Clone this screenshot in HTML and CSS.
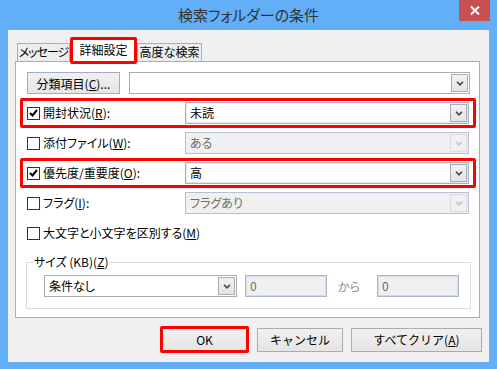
FILE: index.html
```html
<!DOCTYPE html>
<html>
<head>
  <meta charset="UTF-8">
  <title>検索フォルダーの条件</title>
  <link rel="stylesheet" href="styles.css">
</head>
<body>
  <div class="window">
    <div class="titlebar">
      <span></span>
      <h1 class="title">検索フォルダーの条件</h1>
      <div class="close">
        <svg width="10" height="9" viewBox="0 0 10 9"><path d="M1 0.5 L9 8.5 M9 0.5 L1 8.5" stroke="#FFFFFF" stroke-width="2" fill="none"/></svg>
      </div>
    </div>

    <div class="client">
      <div class="tabs">
        <div class="tab tab-msg">メッセージ</div>
        <div class="tab active">詳細設定</div>
        <div class="tab tab-adv">高度な検索</div>
      </div>

      <div class="panel">
        <div class="row first">
          <button class="btn btn-category">分類項目(<u>C</u>)...</button>
          <div class="combo">
            <span class="combo-text"></span>
            <span class="drop"><svg width="8" height="5" viewBox="0 0 8 5"><path d="M1 0.8 L4 3.8 L7 0.8" stroke="#444444" stroke-width="1.6" fill="none"/></svg></span>
          </div>
        </div>

        <div class="row mark">
          <label class="field"><span class="check"><svg width="9" height="8" viewBox="0 0 9 8"><path d="M1 4 L3.5 6.5 L8 1" stroke="#000000" stroke-width="2" fill="none"/></svg></span>開封状況(<u>R</u>):</label>
          <div class="combo blue">
            <span class="combo-text">未読</span>
            <span class="drop"><svg width="8" height="5" viewBox="0 0 8 5"><path d="M1 0.8 L4 3.8 L7 0.8" stroke="#444444" stroke-width="1.6" fill="none"/></svg></span>
          </div>
        </div>

        <div class="row">
          <label class="field"><span class="check"></span>添付ファイル(<u>W</u>):</label>
          <div class="combo disabled">
            <span class="combo-text">ある</span>
            <span class="drop"><svg width="8" height="5" viewBox="0 0 8 5"><path d="M1 0.8 L4 3.8 L7 0.8" stroke="#C4C4C4" stroke-width="1.6" fill="none"/></svg></span>
          </div>
        </div>

        <div class="row mark">
          <label class="field"><span class="check"><svg width="9" height="8" viewBox="0 0 9 8"><path d="M1 4 L3.5 6.5 L8 1" stroke="#000000" stroke-width="2" fill="none"/></svg></span>優先度/重要度(<u>O</u>):</label>
          <div class="combo blue">
            <span class="combo-text">高</span>
            <span class="drop"><svg width="8" height="5" viewBox="0 0 8 5"><path d="M1 0.8 L4 3.8 L7 0.8" stroke="#444444" stroke-width="1.6" fill="none"/></svg></span>
          </div>
        </div>

        <div class="row">
          <label class="field"><span class="check"></span>フラグ(<u>I</u>):</label>
          <div class="combo disabled">
            <span class="combo-text">フラグあり</span>
            <span class="drop"><svg width="8" height="5" viewBox="0 0 8 5"><path d="M1 0.8 L4 3.8 L7 0.8" stroke="#C4C4C4" stroke-width="1.6" fill="none"/></svg></span>
          </div>
        </div>

        <div class="row">
          <label class="field wide"><span class="check"></span>大文字と小文字を区別する(<u>M</u>)</label>
        </div>

        <fieldset class="sizebox">
          <legend>サイズ (KB)(<u>Z</u>)</legend>
          <div class="size-row">
            <div class="combo size-combo">
              <span class="combo-text">条件なし</span>
              <span class="drop"><svg width="8" height="5" viewBox="0 0 8 5"><path d="M1 0.8 L4 3.8 L7 0.8" stroke="#444444" stroke-width="1.6" fill="none"/></svg></span>
            </div>
            <span class="num">0</span>
            <span class="kara">から</span>
            <span class="num">0</span>
          </div>
        </fieldset>
      </div>

      <div class="actions">
        <button class="btn btn-ok">OK</button>
        <button class="btn btn-cancel">キャンセル</button>
        <button class="btn btn-clear">すべてクリア(<u>A</u>)</button>
      </div>
    </div>
  </div>
</body>
</html>
```

FILE: styles.css
```css
body {
  margin: 0;
  font-family: "Noto Sans CJK JP", sans-serif;
  font-size: 12px;
  color: #000000;
  font-feature-settings: "palt";
}

/* ウィンドウ枠 */
.window {
  width: 497px;
  height: 369px;
  background-color: #62AFF7;
  display: flex;
  flex-direction: column;
}

.titlebar {
  height: 30px;
  flex-shrink: 0;
  display: grid;
  grid-template-columns: 1fr auto 1fr;
}

.title {
  margin: 0;
  font-size: 15px;
  font-weight: normal;
  color: #333333;
  line-height: 30px;
}

.close {
  justify-self: end;
  width: 31px;
  height: 21px;
  margin-right: 7px;
  background-color: #C75050;
  display: flex;
  align-items: center;
  justify-content: center;
}

.client {
  height: 332px;
  margin: 0 8px;
  box-sizing: border-box;
  padding-top: 7px;
  background-color: #F0F0F0;
}

/* タブ */
.tabs {
  height: 24px;
  margin-left: 9px;
  display: flex;
  align-items: flex-end;
}

.tab {
  height: 18px;
  box-sizing: border-box;
  border: 1px solid #ADADAD;
  border-bottom: none;
  background-color: #EDEDED;
  line-height: 16px;
  text-align: center;
  white-space: nowrap;
}

.tab-msg {
  width: 53px;
  letter-spacing: -1px;
}

.tab-adv {
  width: 65px;
}

.tab.active {
  position: relative;
  z-index: 1;
  width: 67px;
  height: 27px;
  margin-bottom: -3px;
  border: 3px solid #FF0000;
  border-radius: 2px;
  background-color: #FFFFFF;
  line-height: 20px;
}

.panel {
  margin: 0 9px 0 7px;
  padding: 6px 0 8px 0;
  background-color: #FFFFFF;
  border: 1px solid #ADADAD;
}

/* 行 */
.row {
  height: 30px;
  box-sizing: border-box;
  margin: 0 3px 0 4px;
  padding: 0 4px;
  border: 3px solid transparent;
  border-radius: 2px;
  display: flex;
  align-items: center;
}

.row.mark {
  border-color: #FF0000;
}

.row.first {
  padding-right: 3px;
}

.field {
  width: 158px;
  flex-shrink: 0;
  display: flex;
  align-items: center;
  line-height: 16px;
}

.field.wide {
  width: auto;
}

.check {
  width: 13px;
  height: 13px;
  box-sizing: border-box;
  margin-right: 3px;
  border: 1px solid #333333;
  background-color: #FFFFFF;
  display: flex;
  align-items: center;
  justify-content: center;
}

.combo {
  flex: 1;
  height: 22px;
  box-sizing: border-box;
  padding: 1px;
  border: 1px solid #ABADB3;
  background-color: #FFFFFF;
  display: flex;
}

.combo.blue {
  border-color: #A3B2C9;
  box-shadow: inset 0 0 0 1px #E4E9F1;
}

.combo.disabled {
  border-color: #B5C1D3;
  background-color: #F0F0F0;
  color: #6D6D6D;
}

.combo-text {
  flex: 1;
  padding-left: 3px;
  line-height: 18px;
}

.drop {
  width: 17px;
  box-sizing: border-box;
  border: 1px solid #ACACAC;
  background: linear-gradient(#F2F2F2, #E4E4E4);
  display: flex;
  align-items: center;
  justify-content: center;
}

.combo.disabled .drop {
  border-color: #DCDCDC;
  background: #F0F0F0;
}

/* ボタン */
.btn {
  font-family: inherit;
  font-size: 12px;
  height: 24px;
  padding: 0;
  color: #000000;
  border: 1px solid #ACACAC;
  background: linear-gradient(#F0F0F0, #E5E5E5);
}

.btn-category {
  width: 93px;
  height: 22px;
  margin-right: 9px;
  border-color: #9DAEC6;
}

/* サイズ */
.sizebox {
  margin: 6px 8px 0 10px;
  padding: 0 0 11px 6px;
  border: 1px solid #DCDCDC;
}

.sizebox legend {
  padding: 0 1px;
  line-height: 16px;
}

.size-row {
  margin: 5px 0 0 11px;
  display: flex;
  align-items: center;
}

.size-combo {
  flex: none;
  width: 193px;
}

.num {
  width: 82px;
  height: 22px;
  box-sizing: border-box;
  padding-left: 4px;
  border: 1px solid #A9B8CD;
  box-shadow: inset 0 0 0 1px #D3DBE6;
  background-color: #F0F0F0;
  color: #6D6D6D;
  line-height: 20px;
}

.size-combo + .num {
  margin-left: 8px;
}

.kara {
  margin: 0 17px 0 11px;
  color: #8C8C8C;
}

.actions {
  height: 27px;
  margin: 8px 7px 0 0;
  display: flex;
  justify-content: flex-end;
  align-items: center;
  gap: 8px;
}

.btn-ok {
  width: 89px;
  height: 27px;
  border: 3px solid #FF0000;
  border-radius: 2px;
}

.btn-cancel {
  width: 86px;
}

.btn-clear {
  width: 131px;
}
```
